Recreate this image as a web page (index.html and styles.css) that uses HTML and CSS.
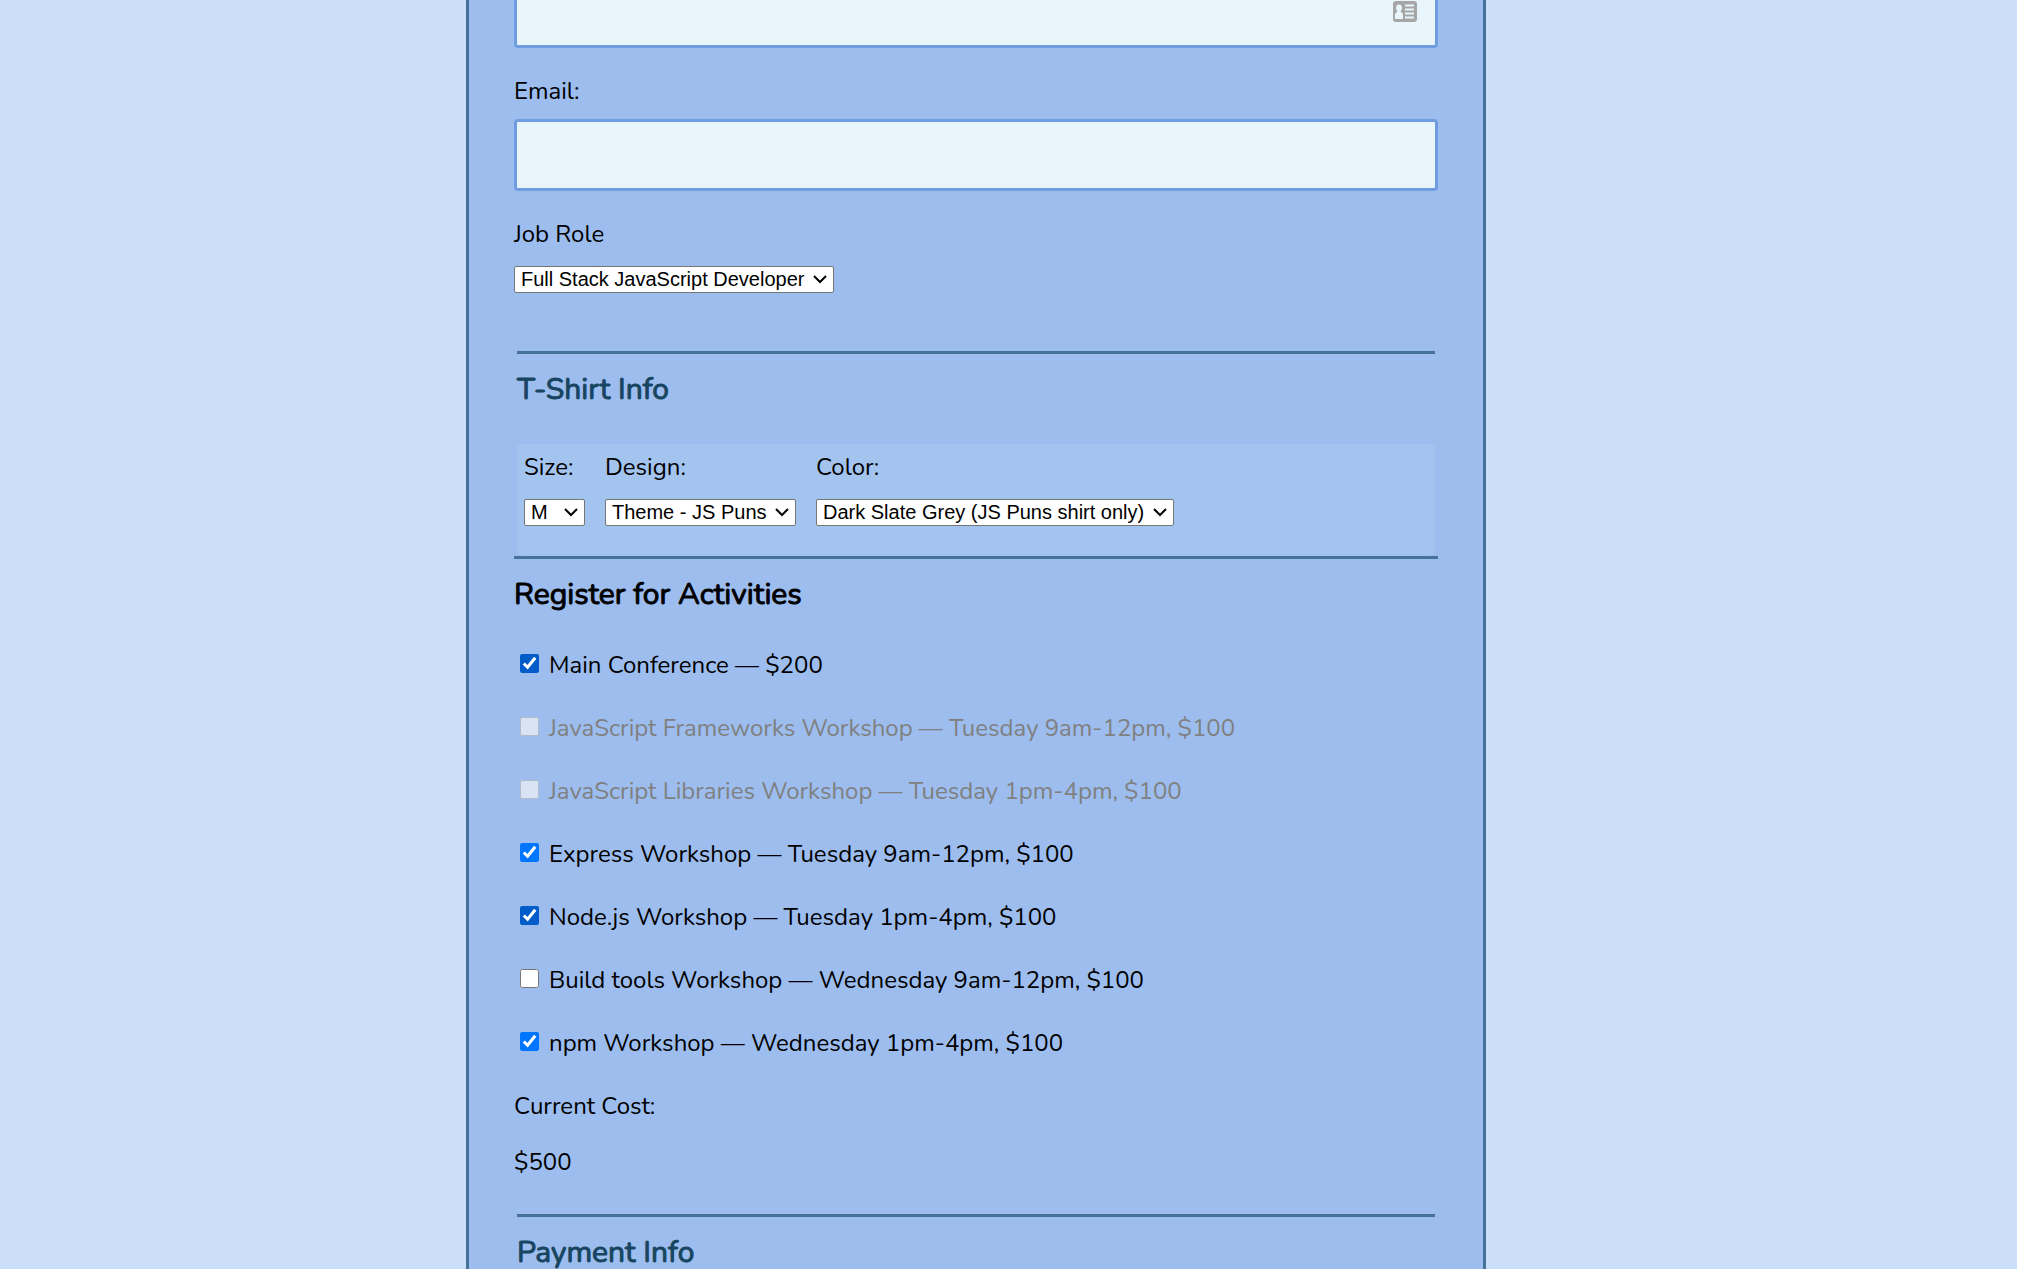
FILE: index.html
```
<!DOCTYPE html>
<html lang="en">
<head>
<meta charset="utf-8">
<title>Conference Registration</title>
<link rel="stylesheet" href="styles.css">
</head>
<body>
<form class="form">
  <section class="basic">
    <div class="name-field">
      <input class="text-input" type="text" aria-label="Name">
      <svg class="contact-icon" viewBox="0 0 24 21" aria-hidden="true">
        <rect width="24" height="21" rx="3" fill="#a6a6a6"/>
        <path d="M6 3.500c2 0 3 1.300 3 3.200 0 1.300-.5 2.300-1.200 2.900v1.300c1.400.5 2.200 1.600 2.200 3.100V18H2v-4c0-1.500.8-2.600 2.200-3.100V9.600C3.500 9 3 8 3 6.700 3 4.800 4 3.500 6 3.500z" fill="#e8f6fc"/>
        <path d="M12 3.500h9v2h-9zM12 7.500h9v2h-9zM12 11.500h9v2h-9zM12 15.500h9v2h-9z" fill="#e8f6fc"/>
      </svg>
    </div>
    <label class="label" for="mail">Email:</label>
    <input class="text-input" type="email" id="mail">
    <label class="label" for="title">Job Role</label>
    <select class="select" id="title">
      <option>Full Stack JavaScript Developer</option>
    </select>
  </section>

  <section class="inset">
    <h2 class="heading">T-Shirt Info</h2>
    <div class="shirt-box">
      <div class="option-field">
        <label for="size">Size:</label>
        <select class="select" id="size">
          <option>M</option>
          <option>XL</option>
        </select>
      </div>
      <div class="option-field">
        <label for="design">Design:</label>
        <select class="select" id="design"><option>Theme - JS Puns</option></select>
      </div>
      <div class="option-field">
        <label for="color">Color:</label>
        <select class="select" id="color"><option>Dark Slate Grey (JS Puns shirt only)</option></select>
      </div>
    </div>
  </section>

  <section class="activities">
    <h2 class="heading heading-dark">Register for Activities</h2>
    <div class="activity-list">
      <label class="activity"><input class="deep" type="checkbox" checked>Main Conference — $200</label>
      <label class="activity unavailable"><input type="checkbox" disabled>JavaScript Frameworks Workshop — Tuesday 9am-12pm, $100</label>
      <label class="activity unavailable"><input type="checkbox" disabled>JavaScript Libraries Workshop — Tuesday 1pm-4pm, $100</label>
      <label class="activity"><input type="checkbox" checked>Express Workshop — Tuesday 9am-12pm, $100</label>
      <label class="activity"><input class="deep" type="checkbox" checked>Node.js Workshop — Tuesday 1pm-4pm, $100</label>
      <label class="activity"><input type="checkbox">Build tools Workshop — Wednesday 9am-12pm, $100</label>
      <label class="activity"><input type="checkbox" checked>npm Workshop — Wednesday 1pm-4pm, $100</label>
    </div>
    <p class="cost-label">Current Cost:</p>
    <p class="cost">$500</p>
  </section>

  <section class="inset">
    <h2 class="heading">Payment Info</h2>
  </section>
</form>
</body>
</html>
```
FILE: styles.css
```
* {
  box-sizing: border-box;
}

html {
  scrollbar-width: none;
}

body {
  margin: 0;
  min-height: 100vh;
  display: grid;
  grid-template-columns: 466fr 1020fr 531fr;
  background: #cbdffb;
  color: #000;
  font: 400 24px/33px Nunito, "Open Sans", sans-serif;
}

.form {
  grid-column: 2;
  min-width: 0;
  padding: 0 45px;
  border: solid #457397;
  border-width: 0 3px;
  background: #9cbdee;
}

.basic {
  display: flex;
  flex-direction: column;
  align-items: flex-start;
  padding-bottom: 58px;
}

/* The name field is partly scrolled past the top of the window. */
.name-field {
  position: relative;
  width: 100%;
  margin-top: -24px;
}

.text-input {
  display: block;
  width: 100%;
  height: 72px;
  padding: 0 16px;
  border: 3px solid #6f9ddf;
  border-radius: 4px;
  background: #e8f6fc;
  font: inherit;
}

.contact-icon {
  position: absolute;
  right: 21px;
  top: 25px;
  width: 24px;
  height: 21px;
}

.label {
  margin: 27px 0 11px;
}

.label + .select {
  margin-top: 4px;
}

.select {
  appearance: none;
  height: 27px;
  padding: 0 28px 2px 6px;
  border: 1px solid #767676;
  border-radius: 2px;
  background: #fff url("data:image/svg+xml,%3Csvg xmlns='http://www.w3.org/2000/svg' width='14' height='9' viewBox='0 0 14 9'%3E%3Cpath d='M1 1l6 6 6-6' fill='none' stroke='%23000' stroke-width='2'/%3E%3C/svg%3E") no-repeat right 6px center;
  color: #000;
  font: 20px "Liberation Sans", Arial, sans-serif;
}

.inset {
  margin: 0 3px;
  border-top: 3px solid #457397;
}

.heading {
  margin: 15px 0 34px;
  color: #184560;
  font-size: 30px;
  font-weight: 400;
  line-height: 41px;
  -webkit-text-stroke: 1px;
}

.heading-dark {
  color: #000;
}

.shirt-box {
  display: flex;
  gap: 20px;
  padding: 7px 7px 30px;
  border-radius: 6px;
  background: #a4c4f0;
}

.option-field {
  display: flex;
  flex-direction: column;
  align-items: flex-start;
  gap: 15px;
}

.activities {
  border-top: 3px solid #457397;
  padding-bottom: 35px;
}

.activity-list {
  display: flex;
  flex-direction: column;
  align-items: flex-start;
  gap: 30px;
}

.activity {
  display: flex;
  align-items: flex-start;
  gap: 10px;
}

.activity input {
  flex: none;
  width: 19px;
  height: 19px;
  margin: 5px 0 0 6px;
  accent-color: #0075ff;
}

.activity .deep {
  accent-color: #005cc8;
}

.unavailable {
  color: #808080;
}

.cost-label {
  margin: 30px 0 23px;
}

.cost {
  margin: 0;
}
```
